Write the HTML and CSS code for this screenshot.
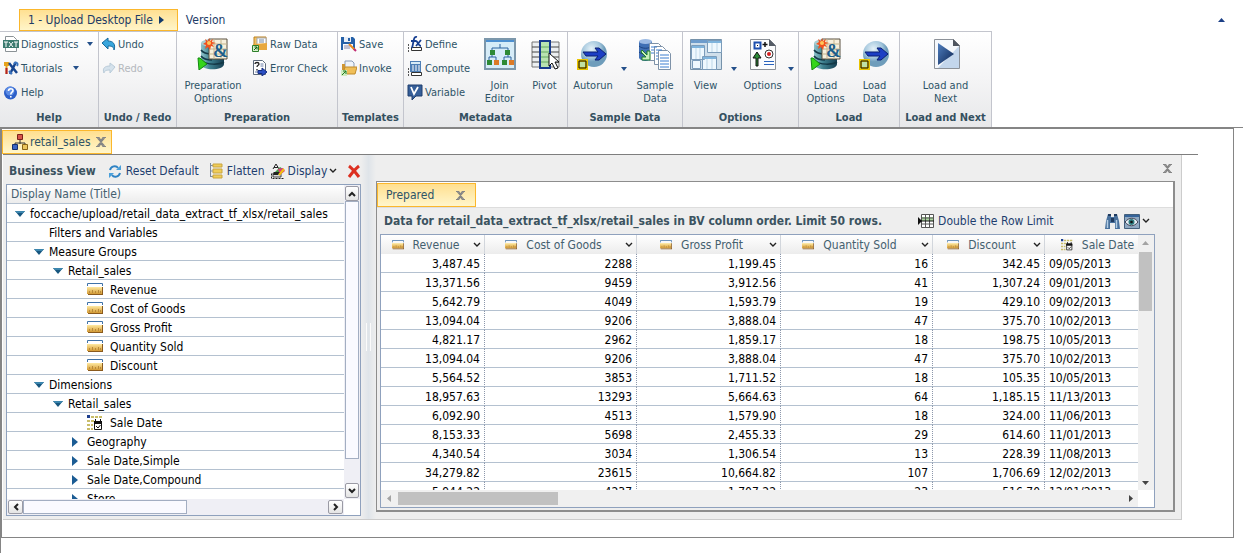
FILE: index.html
```
<!DOCTYPE html>
<html lang="en">
<head>
    <meta charset="utf-8">
    <title>Upload Desktop File</title>
    <link rel="stylesheet" href="styles.css">
</head>
<body>
    <svg class="sprite" aria-hidden="true">
        <defs>
            <linearGradient id="teal"><stop offset="0" stop-color="#8fc3cb"/><stop offset=".4" stop-color="#3c7f8e"/><stop offset="1" stop-color="#173f52"/></linearGradient>
            <linearGradient id="gold" x2="0" y2="1"><stop offset="0" stop-color="#ffe9a0"/><stop offset="1" stop-color="#d39a35"/></linearGradient>
            <linearGradient id="navy" x2="1" y2="1"><stop offset="0" stop-color="#4f7fc0"/><stop offset="1" stop-color="#0c2350"/></linearGradient>
            <radialGradient id="orb" cx=".4" cy=".3"><stop offset="0" stop-color="#e4f1f8"/><stop offset=".7" stop-color="#a3c6dc"/><stop offset="1" stop-color="#6f9dbb"/></radialGradient>
        </defs>
        <symbol id="ruler" viewBox="0 0 16 13">
            <path d="M.5 3V.5h15V3" fill="none" stroke="#3f72a8"/>
            <path d="M0 4h15v7H0z" fill="url(#gold)"/>
            <path d="M15 4h1v8H1v-1h14z" fill="#8a5a1e"/>
            <path d="M2.500 8v2M5.500 7v3M8.500 8v2M11.500 7v3M13.500 8v2" stroke="#b98a3a"/>
        </symbol>
        <symbol id="date" viewBox="0 0 16 16">
            <path d="M0 0h3v3H0z" fill="#1d3f8f"/>
            <path d="M4 1h3v2H4zM8 1h3v2H8zM12 1h3v2h-3zM0 5h3v2H0zM0 9h3v2H0zM0 13h3v2H0zM4 5h3v2H4zM4 9h2v2H4zM4 13h2v2H4z" fill="#c9bd6a"/>
            <path d="M7.500 6.500h7v8h-7z" fill="#fff" stroke="#111"/>
            <path d="M7 6h8v3H7zM8 4h1v2H8zM13 4h1v2h-1z" fill="#111"/>
            <path d="M9 11l2 2 2.500-3" fill="none" stroke="#111"/>
        </symbol>
        <symbol id="dboptions" viewBox="0 0 32 32">
            <path d="M4 5v21c0 7 23 7 23 0V5z" fill="url(#teal)"/>
            <ellipse cx="15" cy="5" rx="11" ry="4" fill="#a9cdd2"/>
            <path d="M4 12c3 4 8 4 11 4M4 18c3 4 8 4 11 4M5 23c5 4 17 4 22 1" fill="none" stroke="#143947" stroke-width="1.500"/>
            <path d="M12 1h18v20H12z" fill="#f7f0dc" stroke="#5b5140"/>
            <path d="M12 6h18M12 11h18M12 16h18M17 1v20M24 1v20" stroke="#c2b48e"/>
            <path d="M12 0l1 3 3-2-1 3 4 1-4 1 2 3-3-1-1 4-2-3-3 2 1-4-3-1 3-2-1-3 3 2z" fill="#f0521f"/>
            <circle cx="12" cy="5" r="2" fill="#ffc65a"/>
            <path d="M1 20h2l7 6-8 6z" fill="#35d51c" stroke="#128a10"/>
        </symbol>
        <symbol id="orbarrow" viewBox="0 0 32 32">
            <circle cx="17" cy="16" r="13" fill="url(#orb)"/>
            <path d="M6 14h15l-3-4h4l7 6-7 6h-4l3-4H9z" fill="#1c3fc4" stroke="#0b1f72"/>
            <path d="M1.500 22.500h8v8h-8z" fill="#bfe0a5" stroke="#e9c400" stroke-width="3"/>
            <path d="M2 23h7v7H2z" fill="none" stroke="#111"/>
        </symbol>
        <symbol id="cross" viewBox="0 0 10 10">
            <path d="M0 .5h3L5 3.500 7 .5h3M0 9.500h3L5 6.500l2 3h3M1.500 1l7 8M8.500 1l-7 8" fill="none" stroke="#858585" stroke-width="1.200"/>
        </symbol>
        <symbol id="chev" viewBox="0 0 8 6"><path d="M1 1l3 3 3-3" fill="none" stroke="#222" stroke-width="1.400"/></symbol>
        <symbol id="drop" viewBox="0 0 6 4"><path d="M0 0h6L3 4z" fill="#24508a"/></symbol>
        <symbol id="open" viewBox="0 0 10 6"><path d="M0 0h10L5 6z" fill="#17567f"/><path d="M0 0h10L8 2H2z" fill="#3c86ae"/></symbol>
        <symbol id="closed" viewBox="0 0 6 10"><path d="M0 0l6 5-6 5z" fill="#1b5c94"/></symbol>
    </svg>

    <nav class="steps">
        <button class="step active">1 - Upload Desktop File
            <svg width="5" height="8" viewBox="0 0 5 8"><path d="M0 0l5 4-5 4z" fill="#123a6b"/></svg>
        </button>
        <a class="step" href="#version">Version</a>
        <button class="collapse" aria-label="Collapse ribbon"><svg width="7" height="4" viewBox="0 0 7 4"><path d="M0 4h7L3.500 0z" fill="#1b3f86"/></svg></button>
    </nav>

    <div class="ribbon">
        <section class="group help">
            <div class="tools">
                <div class="stack">
                    <button class="small">
                        <svg width="16" height="16" viewBox="0 0 16 16"><path d="M2.500.5h8l3 3v12h-11z" fill="#fff" stroke="#8b9296"/><path d="M0 4h16v8H0z" fill="#3c7a6f"/><path d="M1 6h4M3 6v5M6 6l4 5M10 6l-4 5M11 6h4M13 6v5" stroke="#fff" fill="none"/></svg>
                        Diagnostics <svg class="push" width="6" height="4"><use href="#drop"/></svg>
                    </button>
                    <button class="small tutorials">
                        <svg width="16" height="16" viewBox="0 0 16 16"><path d="M1 2h5v4H4.500v8h-2V6H1z" fill="#e6a31c"/><path d="M2.500 8h2v6h-2z" fill="#b3202a"/><path d="M6 3l8 10M13 2L7 14" stroke="#17458f" stroke-width="2.500"/><path d="M11 4c1-3 5-1 3 2M6 11l3 3" stroke="#3b74bf" fill="none" stroke-width="2"/></svg>
                        Tutorials <svg class="push" width="6" height="4"><use href="#drop"/></svg>
                    </button>
                    <button class="small">
                        <svg width="16" height="16" viewBox="0 0 16 16"><circle cx="7.500" cy="9" r="6.500" fill="#2c5fc9"/><circle cx="7" cy="7" r="4.500" fill="#5c8ce4"/><path d="M5.500 7c0-3 4.500-3 4.500-.5C10 8.500 7.800 8 7.800 10.500M7.800 12v1.600" fill="none" stroke="#fff" stroke-width="1.600"/></svg>
                        Help
                    </button>
                </div>
            </div>
            <h2>Help</h2>
        </section>

        <section class="group undo">
            <div class="tools">
                <div class="stack">
                    <button class="small">
                        <svg width="14" height="14" viewBox="0 0 14 14"><path d="M0 6l6-5v3c5 0 8 3 6 9 0-3-2-4-6-4v3z" fill="#39a6dc" stroke="#17699c"/></svg>
                        Undo
                    </button>
                    <button class="small" disabled>
                        <svg width="14" height="14" viewBox="0 0 14 14"><path d="M13 6L8 2v3C3 5 0 7 2 12c0-2 2-3 6-3v3z" fill="#d5e2ec" stroke="#b9cbd9"/></svg>
                        Redo
                    </button>
                </div>
            </div>
            <h2>Undo / Redo</h2>
        </section>

        <section class="group prep">
            <div class="tools">
                <button class="big"><svg width="32" height="32"><use href="#dboptions"/><text x="16" y="19" class="amp">&amp;</text></svg>Preparation Options</button>
                <div class="stack">
                    <button class="small">
                        <svg width="16" height="16" viewBox="0 0 16 16"><path d="M2 1h12v10H2z" fill="#f2c465" stroke="#bb8022"/><path d="M5 2h9v8H5z" fill="#fff" stroke="#a3a9b3"/><path d="M7 4h5M7 6h5" stroke="#6e88a8"/><path d="M1 8l14-1v7H3z" fill="#e8a83e"/><path d="M.5 9.500h6v6h-6z" fill="#d7f1c9" stroke="#2d7f2b"/><path d="M2 14l3-3M2.500 11H5v2.500" stroke="#135e13" fill="none"/></svg>
                        Raw Data
                    </button>
                    <button class="small">
                        <svg width="16" height="16" viewBox="0 0 16 16"><path d="M1.500.5h9l3 3v11h-12z" fill="#fff" stroke="#5d6a7c"/><path d="M3 4c0-2 4-2 4 0 0 1.500-2 1-2 3M5 9v1.500" fill="none" stroke="#222" stroke-width="1.300"/><path d="M8.500 4h3M8.500 6h3M3 12h3" stroke="#6a7ea8"/><path d="M6 10.500h4V8l5 4-5 4v-2.500H6z" fill="#2b4fc4" stroke="#142d80"/></svg>
                        Error Check
                    </button>
                </div>
            </div>
            <h2>Preparation</h2>
        </section>

        <section class="group templates">
            <div class="tools">
                <div class="stack">
                    <button class="small">
                        <svg width="16" height="16" viewBox="0 0 16 16"><path d="M0 1h12l2 2v11H0z" fill="#2561a8"/><path d="M3 1h7v5H3z" fill="#e8eef7"/><path d="M7 2h2v3H7z" fill="#2561a8"/><path d="M2 8h10v6H2z" fill="#f6f8fb"/><path d="M3 10h6M3 12h6" stroke="#88a"/><path d="M8 8l6 6" stroke="#e88a1f" stroke-width="2"/><path d="M13 13l2 2" stroke="#c02b77" stroke-width="2"/></svg>
                        Save
                    </button>
                    <button class="small">
                        <svg width="16" height="16" viewBox="0 0 16 16"><path d="M4 1h7l2 2v9H4z" fill="#eef3f9" stroke="#8b9cb5"/><path d="M1 4h3v9H1z" fill="#cf9634"/><path d="M2 14l2-7h12l-2 7z" fill="#f0bf58" stroke="#c08b2a"/><path d="M0 10h6v6H0z" fill="#d0ecc0"/><path d="M1 15l4-4M2 11h3v3" fill="none" stroke="#207c20"/></svg>
                        Invoke
                    </button>
                </div>
            </div>
            <h2>Templates</h2>
        </section>

        <section class="group metadata">
            <div class="tools">
                <div class="stack">
                    <button class="small">
                        <svg width="16" height="16" viewBox="0 0 16 16"><path d="M1 15h1M1 12h1M1 9h1" stroke="#222" stroke-width="1.500"/><path d="M4.500 11.500h10v3h-10z" fill="#fff" stroke="#333"/><path d="M10 1C6 0 7 6 5 12M4 5h5M9 5c2 0 2 5 5 5M14 4l-5 6" fill="none" stroke="#173f91" stroke-width="1.800"/></svg>
                        Define
                    </button>
                    <button class="small">
                        <svg width="16" height="16" viewBox="0 0 16 16"><path d="M1 15h1M1 12h1M1 9h1" stroke="#222" stroke-width="1.500"/><path d="M3 1h11v11H3z" fill="#4f7fb5"/><path d="M4 2h9v2H4z" fill="#d9ecf7"/><path d="M5 6h8M5 8h8M5 10h8" stroke="#fff" stroke-dasharray="2 1"/><path d="M4.500 12.500h10v3h-10z" fill="#fff" stroke="#333"/></svg>
                        Compute
                    </button>
                    <button class="small">
                        <svg width="16" height="16" viewBox="0 0 16 16"><path d="M1 1h14v11H9l-4 4v-4H1z" fill="#365f99" stroke="#1e3e6e"/><path d="M4 3l3 7 4-7" fill="none" stroke="#fff" stroke-width="1.800"/></svg>
                        Variable
                    </button>
                </div>
                <button class="big">
                    <svg width="32" height="32" viewBox="0 0 32 32"><path d="M1 1h30v30H1z" fill="#d6ecf8" stroke="#7c97ab" stroke-width="2"/><path d="M2 3h28" stroke="#4c8fd0" stroke-width="2"/><path d="M16 6v4M8 14v-4h16v4M5 23v-4h7v4M20 23v-4h7v4M8 16v3M24 16v3" stroke="#2b63a0" fill="none"/><path d="M6 12h5v5H6zM21 12h5v5h-5zM3 22h5v5H3zM18 22h5v5h-5z" fill="#2d8a35"/><path d="M10 22h5v5h-5zM25 22h5v5h-5z" fill="#dc7a26"/></svg>
                    Join Editor
                </button>
                <button class="big">
                    <svg width="32" height="32" viewBox="0 0 32 32"><path d="M3 4h27v25H3z" fill="#eceff1" stroke="#777"/><path d="M3 9h27M3 14h27M3 19h27M3 24h27" stroke="#444"/><path d="M11 3h10v27H11z" fill="#b8e3b0" stroke="#173a8c" stroke-width="2"/><path d="M12 9h8M12 14h8M12 19h8M12 24h8" stroke="#65a85f"/><path d="M20 15v13l3-3 3 6 3-1-3-6h4z" fill="#fff" stroke="#111"/></svg>
                    Pivot
                </button>
            </div>
            <h2>Metadata</h2>
        </section>

        <section class="group sample">
            <div class="tools">
                <button class="big"><svg width="32" height="32"><use href="#orbarrow"/></svg>Autorun</button>
                <button class="more" aria-label="Autorun menu"><svg width="6" height="4"><use href="#drop"/></svg></button>
                <button class="big">
                    <svg width="32" height="32" viewBox="0 0 32 32"><path d="M0 3v17c2 4 11 4 13 0V3z" fill="#3f6fb4"/><ellipse cx="6.500" cy="3.500" rx="6.500" ry="2.500" fill="#9dbbe4"/><path d="M0 8c3 3 10 3 13 0M0 14c3 3 10 3 13 0" fill="none" stroke="#1c4280"/><path d="M10.500 5.500h9l3 3v14h-12z" fill="#fff" stroke="#7e92a8"/><path d="M15.500 8.500h8l3 3v15h-11z" fill="#fff" stroke="#7e92a8"/><path d="M19.500 12.500h9l3 3v16h-12z" fill="#fff" stroke="#7e92a8"/><path d="M21 17h9M21 20h9M21 23h9M21 26h9M21 29h9M12 9h6M12 12h3M12 15h3M17 12h6M17 15h2M17 18h2M17 21h2" stroke="#3c7fd0"/><path d="M3 12l5 5v-4h3v9H3v-3h4l-5-5z" fill="#c8efbb" stroke="#1d7d28"/></svg>
                    Sample Data
                </button>
            </div>
            <h2>Sample Data</h2>
        </section>

        <section class="group options">
            <div class="tools">
                <button class="big">
                    <svg width="32" height="32" viewBox="0 0 32 32"><path d="M.5 1.500h31v30H.5z" fill="#cfdfeb" stroke="#7692aa"/><path d="M1 2h30v3H1z" fill="#6d9ccc"/><path d="M17.500 2.500h14v12h-14zM1.500 7.500h13v14h-13zM12.500 18.500h14v13h-14zM2.500 22.500h8v8h-8z" fill="#eef8fe" stroke="#7b9cba"/><path d="M18 3h13v2H18zM2 8h12v2H2zM13 19h13v2H13z" fill="#7eb4dd"/><path d="M22 5v9M27 5v9M6 10v11M10 10v11M17 21v10M22 21v10" stroke="#bdd7e8"/></svg>
                    View
                </button>
                <button class="more" aria-label="View menu"><svg width="6" height="4"><use href="#drop"/></svg></button>
                <button class="big">
                    <svg width="32" height="32" viewBox="0 0 32 32"><path d="M3.500 1.500h19l6 6v24h-25z" fill="#fbfcfd" stroke="#8c9198"/><path d="M22 1l7 7h-7z" fill="#555c66"/><path d="M7.500 4.500h6v6h-6z" fill="#fff" stroke="#1c4fb0" stroke-width="2"/><path d="M10 7h1v1h-1z" fill="#111"/><path d="M18 4v5M15.500 6.500h5" stroke="#111" stroke-width="1.500"/><path d="M10 14l4 6h-3v8H9v-8H6z" fill="#2a8a36" stroke="#111"/><circle cx="22" cy="16" r="4" fill="#fff" stroke="#333"/><circle cx="22" cy="16" r="2" fill="#d61f1f"/><path d="M17 23.500h10M17 26.500h10" stroke="#2a63bd"/></svg>
                    Options
                </button>
                <button class="more" aria-label="Options menu"><svg width="6" height="4"><use href="#drop"/></svg></button>
            </div>
            <h2>Options</h2>
        </section>

        <section class="group load">
            <div class="tools">
                <button class="big"><svg width="32" height="32"><use href="#dboptions"/><text x="16" y="19" class="amp">&amp;</text></svg>Load Options</button>
                <button class="big"><svg width="32" height="32"><use href="#orbarrow"/></svg>Load Data</button>
            </div>
            <h2>Load</h2>
        </section>

        <section class="group next">
            <div class="tools">
                <button class="big">
                    <svg width="32" height="32" viewBox="0 0 32 32"><path d="M4.500 1.500h19l6 6v23h-25z" fill="#f5f8fc" stroke="#8c9198"/><path d="M29 8v22H8z" fill="#c3d6ec"/><path d="M23 1l7 7h-7z" fill="#4e5560"/><path d="M8 5l16 11L8 27z" fill="url(#navy)"/></svg>
                    Load and Next
                </button>
            </div>
            <h2>Load and Next</h2>
        </section>
    </div>

    <div class="page">
    <main class="frame">
        <div class="file-tabs">
            <button class="tab">
                <svg width="16" height="16" viewBox="0 0 16 16"><path d="M8 6v4M3 11V9h10v2" stroke="#333" fill="none"/><path d="M5.500.5h5v5h-5z" fill="#d8554a" stroke="#7c2019"/><path d="M.5 10.500h5v5h-5z" fill="#3b66c4" stroke="#16306e"/><path d="M10.500 10.500h5v5h-5z" fill="#ecc65c" stroke="#8a6417"/></svg>
                retail_sales
                <svg class="x" width="10" height="10"><use href="#cross"/></svg>
            </button>
        </div>

        <div class="workspace">
            <section class="business">
                <div class="toolbar">
                    <strong>Business View</strong>
                    <button class="tool"><svg width="14" height="15" viewBox="0 0 14 15"><path d="M2 6c1-4 6-5 8-2M12 9c-1 4-6 5-8 2" fill="none" stroke="#2f83c4" stroke-width="2"/><path d="M13 1v5H8zM1 14V9h5z" fill="#4ba0da"/></svg>Reset Default</button>
                    <button class="tool"><svg width="14" height="16" viewBox="0 0 14 16"><path d="M1.500 0v14M1 2.500h3M1 8h3M1 13.500h3" stroke="#7c8ba0" fill="none"/><path d="M4 1h9v3H4zM4 6h9v4H4zM4 12h9v3H4z" fill="#f0cd58" stroke="#c9a540"/></svg>Flatten</button>
                    <button class="tool display"><svg width="15" height="16" viewBox="0 0 15 16"><path d="M2 6l3-5 3 5M3 4.500h4" stroke="#222" fill="none"/><path d="M.5 10.500v5h12" stroke="#222" fill="none" stroke-dasharray="2 1"/><path d="M2 10h8v4H2z" fill="#d9d9d9" stroke="#444"/><path d="M4 9l5-5 3 2-5 6z" fill="#43a047"/><path d="M7 6l5-1 2 3-5 4z" fill="#e23b7a"/><path d="M3 9h6l-2 3H2z" fill="#222"/><path d="M8 12l5-6" stroke="#f1c40f" stroke-width="2"/></svg>Display<svg width="8" height="6"><use href="#chev"/></svg></button>
                    <button class="tool delete" aria-label="Delete"><svg width="14" height="15" viewBox="0 0 14 15"><path d="M2 2c4 3 7 7 10 11M12 2C8 5 5 9 2 13" fill="none" stroke="#dc2f20" stroke-width="3"/></svg></button>
                </div>
                <div class="tree">
                    <div class="tree-head">Display Name (Title)</div>
                    <ul class="nodes">
                        <li class="l0"><i><svg width="10" height="6"><use href="#open"/></svg></i>foccache/upload/retail_data_extract_tf_xlsx/retail_sales</li>
                        <li class="l1"><i></i>Filters and Variables</li>
                        <li class="l1"><i><svg width="10" height="6"><use href="#open"/></svg></i>Measure Groups</li>
                        <li class="l2"><i><svg width="10" height="6"><use href="#open"/></svg></i>Retail_sales</li>
                        <li class="l3"><i></i><svg class="kind" width="16" height="13"><use href="#ruler"/></svg>Revenue</li>
                        <li class="l3"><i></i><svg class="kind" width="16" height="13"><use href="#ruler"/></svg>Cost of Goods</li>
                        <li class="l3"><i></i><svg class="kind" width="16" height="13"><use href="#ruler"/></svg>Gross Profit</li>
                        <li class="l3"><i></i><svg class="kind" width="16" height="13"><use href="#ruler"/></svg>Quantity Sold</li>
                        <li class="l3"><i></i><svg class="kind" width="16" height="13"><use href="#ruler"/></svg>Discount</li>
                        <li class="l1"><i><svg width="10" height="6"><use href="#open"/></svg></i>Dimensions</li>
                        <li class="l2"><i><svg width="10" height="6"><use href="#open"/></svg></i>Retail_sales</li>
                        <li class="l3"><i></i><svg class="kind" width="16" height="16"><use href="#date"/></svg>Sale Date</li>
                        <li class="l3"><i><svg width="6" height="10"><use href="#closed"/></svg></i>Geography</li>
                        <li class="l3"><i><svg width="6" height="10"><use href="#closed"/></svg></i>Sale Date,Simple</li>
                        <li class="l3"><i><svg width="6" height="10"><use href="#closed"/></svg></i>Sale Date,Compound</li>
                        <li class="l3"><i><svg width="6" height="10"><use href="#closed"/></svg></i>Store</li>
                    </ul>
                    <div class="vscroll">
                        <button aria-label="Scroll up"><svg width="8" height="6" viewBox="0 0 8 6"><path d="M1 5l3-3 3 3" fill="none" stroke="#222" stroke-width="2"/></svg></button>
                        <div class="thumb"></div>
                        <button aria-label="Scroll down"><svg width="8" height="6" viewBox="0 0 8 6"><path d="M1 1l3 3 3-3" fill="none" stroke="#222" stroke-width="2"/></svg></button>
                    </div>
                    <div class="hscroll">
                        <button aria-label="Scroll left"><svg width="6" height="8" viewBox="0 0 6 8"><path d="M5 1L2 4l3 3" fill="none" stroke="#222" stroke-width="2"/></svg></button>
                        <div class="thumb"></div>
                        <button aria-label="Scroll right"><svg width="6" height="8" viewBox="0 0 6 8"><path d="M1 1l3 3-3 3" fill="none" stroke="#222" stroke-width="2"/></svg></button>
                    </div>
                </div>
            </section>

            <div class="splitter"><span></span></div>

            <section class="output">
                <div class="output-top"><button class="plain" aria-label="Close output"><svg width="9" height="9"><use href="#cross"/></svg></button></div>
                <div class="panel">
                    <div class="panel-tabs"><button class="tab">Prepared<svg class="x" width="9" height="9"><use href="#cross"/></svg></button></div>
                    <div class="panel-bar">
                        <strong>Data for retail_data_extract_tf_xlsx/retail_sales in BV column order. Limit 50 rows.</strong>
                        <button class="tool double"><svg width="16" height="14" viewBox="0 0 16 14"><path d="M3 1h12v12H3z" fill="#fff"/><path d="M3 3h12v4H3z" fill="#a9d59d"/><path d="M3.500.5h12v13h-12zM7.500 1v12M11.500 1v12M3 4h12M3 10h12" fill="none" stroke="#555"/><path d="M3 7h13" stroke="#111"/><path d="M0 3l4 4-4 4z" fill="#111"/></svg>Double the Row Limit</button>
                        <button class="plain find" aria-label="Find"><svg width="15" height="16" viewBox="0 0 15 16"><path d="M3 1h3v3h3V1h3l2 7 1 8h-5v-6H5v6H0l1-8z" fill="#48709c"/><path d="M3 1h3v2H3zM9 1h3v2H9zM6 5h3v4H6z" fill="#1e3a5f"/><path d="M2.500 7v8M11.500 7v8" stroke="#b4cde4" stroke-width="1.500"/></svg></button>
                        <button class="plain" aria-label="Preview"><svg width="16" height="15" viewBox="0 0 16 15"><path d="M.5.5h15v14H.5z" fill="#8fa9c2" stroke="#44607c"/><path d="M1 1h14v2H1z" fill="#35649a"/><path d="M1 8c4-5 10-5 13 0-4 5-9 5-13 0z" fill="#e4eef5" stroke="#445"/><circle cx="7.500" cy="8" r="3" fill="#2f7c80"/><circle cx="7.500" cy="8" r="1.300" fill="#111"/></svg><svg width="8" height="6"><use href="#chev"/></svg></button>
                    </div>
                    <div class="grid">
                        <div class="viewport">
                            <table>
                                <colgroup><col class="c-revenue"><col class="c-cost"><col class="c-profit"><col class="c-quantity"><col class="c-discount"><col class="c-date"></colgroup>
                                <thead>
                                    <tr>
                                        <th><div><svg width="12" height="10"><use href="#ruler"/></svg><span>Revenue</span><svg width="8" height="6"><use href="#chev"/></svg></div></th>
                                        <th><div><svg width="12" height="10"><use href="#ruler"/></svg><span>Cost of Goods</span><svg width="8" height="6"><use href="#chev"/></svg></div></th>
                                        <th><div><svg width="12" height="10"><use href="#ruler"/></svg><span>Gross Profit</span><svg width="8" height="6"><use href="#chev"/></svg></div></th>
                                        <th><div><svg width="12" height="10"><use href="#ruler"/></svg><span>Quantity Sold</span><svg width="8" height="6"><use href="#chev"/></svg></div></th>
                                        <th><div><svg width="12" height="10"><use href="#ruler"/></svg><span>Discount</span><svg width="8" height="6"><use href="#chev"/></svg></div></th>
                                        <th><div><svg width="12" height="12"><use href="#date"/></svg><span>Sale Date</span><svg width="8" height="6"><use href="#chev"/></svg></div></th>
                                    </tr>
                                </thead>
                                <tbody>
                                    <tr><td>3,487.45</td><td>2288</td><td>1,199.45</td><td>16</td><td>342.45</td><td>09/05/2013</td></tr>
                                    <tr><td>13,371.56</td><td>9459</td><td>3,912.56</td><td>41</td><td>1,307.24</td><td>09/01/2013</td></tr>
                                    <tr><td>5,642.79</td><td>4049</td><td>1,593.79</td><td>19</td><td>429.10</td><td>09/02/2013</td></tr>
                                    <tr><td>13,094.04</td><td>9206</td><td>3,888.04</td><td>47</td><td>375.70</td><td>10/02/2013</td></tr>
                                    <tr><td>4,821.17</td><td>2962</td><td>1,859.17</td><td>18</td><td>198.75</td><td>10/05/2013</td></tr>
                                    <tr><td>13,094.04</td><td>9206</td><td>3,888.04</td><td>47</td><td>375.70</td><td>10/02/2013</td></tr>
                                    <tr><td>5,564.52</td><td>3853</td><td>1,711.52</td><td>18</td><td>105.35</td><td>10/05/2013</td></tr>
                                    <tr><td>18,957.63</td><td>13293</td><td>5,664.63</td><td>64</td><td>1,185.15</td><td>11/13/2013</td></tr>
                                    <tr><td>6,092.90</td><td>4513</td><td>1,579.90</td><td>18</td><td>324.00</td><td>11/06/2013</td></tr>
                                    <tr><td>8,153.33</td><td>5698</td><td>2,455.33</td><td>29</td><td>614.60</td><td>11/01/2013</td></tr>
                                    <tr><td>4,340.54</td><td>3034</td><td>1,306.54</td><td>13</td><td>228.39</td><td>11/08/2013</td></tr>
                                    <tr><td>34,279.82</td><td>23615</td><td>10,664.82</td><td>107</td><td>1,706.69</td><td>12/02/2013</td></tr>
                                    <tr><td>5,944.22</td><td>4237</td><td>1,707.22</td><td>23</td><td>516.70</td><td>12/01/2013</td></tr>
                                </tbody>
                            </table>
                        </div>
                        <div class="vscroll">
                            <button aria-label="Scroll up"><svg width="7" height="4" viewBox="0 0 7 4"><path d="M0 4h7L3.500 0z" fill="#a3a3a3"/></svg></button>
                            <div class="thumb"></div>
                            <button aria-label="Scroll down"><svg width="7" height="4" viewBox="0 0 7 4"><path d="M0 0h7L3.500 4z" fill="#444"/></svg></button>
                        </div>
                        <div class="hscroll">
                            <button aria-label="Scroll left"><svg width="4" height="7" viewBox="0 0 4 7"><path d="M4 0v7L0 3.500z" fill="#a3a3a3"/></svg></button>
                            <div class="thumb"></div>
                            <button aria-label="Scroll right"><svg width="4" height="7" viewBox="0 0 4 7"><path d="M0 0v7l4-3.500z" fill="#444"/></svg></button>
                        </div>
                    </div>
                </div>
            </section>
        </div>
    </main>
    </div>
</body>
</html>
```

FILE: styles.css
```
* {
    box-sizing: border-box;
}
body {
    margin: 0;
    height: 100vh;
    display: flex;
    flex-direction: column;
    overflow: hidden;
    background: #fff;
    color: #000;
    font-family: "DejaVu Sans Condensed", "DejaVu Sans", sans-serif;
    font-size: 12px;
}
button {
    display: flex;
    align-items: center;
    padding: 0;
    border: none;
    background: none;
    color: inherit;
    font: inherit;
    white-space: nowrap;
    cursor: pointer;
}
svg {
    flex: none;
    display: block;
}
.sprite {
    position: absolute;
    width: 0;
    height: 0;
}
.amp {
    font: bold 18px "Liberation Serif", serif;
    fill: #1d5f8c;
}

/* steps */
.steps {
    display: flex;
    align-items: stretch;
    height: 31px;
    padding: 9px 18px 0 19px;
    color: #1d3b66;
}
.step {
    display: flex;
    align-items: center;
    gap: 6px;
    padding: 0 8px;
    color: #1d3b66;
    text-decoration: none;
}
.step.active {
    padding-right: 13px;
    border: 1px solid #fbb72c;
    background: linear-gradient(#ffe092, #fff5c9);
}
.collapse {
    margin-left: auto;
}

/* ribbon */
.ribbon {
    display: flex;
    color: #2e5468;
    font-size: 11px;
}
.group {
    flex: none;
    height: 96px;
    border: 1px solid #c3c5cd;
    border-width: 1px 1px 0 0;
    background: linear-gradient(#fff, #f4f4f5 50%, #e7e8ea);
}
.help { width: 99px; }
.undo { width: 78px; }
.prep { width: 161px; }
.templates { width: 66px; }
.metadata { width: 164px; }
.sample { width: 115px; }
.options { width: 116px; }
.load { width: 101px; }
.next { width: 92px; }
.tools {
    display: flex;
    height: 74px;
    padding-left: 3px;
}
.group h2 {
    margin: 0;
    line-height: 24px;
    text-align: center;
    font-size: 11px;
    color: #34505f;
}
.stack {
    flex: 1;
}
.small {
    width: 100%;
    height: 24px;
    gap: 2px;
}
.small:disabled {
    color: #b4b8bd;
}
.push {
    margin: 0 5px 0 auto;
}
.tutorials .push {
    margin-right: 19px;
}
.big {
    flex-direction: column;
    width: 45px;
    padding-top: 6px;
    line-height: 13px;
    white-space: normal;
    text-align: center;
}
.big svg {
    margin-bottom: 9px;
}
.more {
    width: 12px;
    justify-content: center;
}
.prep .big {
    width: 66px;
    margin-right: 6px;
}
.sample .tools,
.options .tools {
    padding-left: 0;
}
.sample .big,
.load .big {
    width: 50px;
}
.load .tools {
    padding-left: 2px;
}
.next .tools {
    justify-content: center;
    padding: 0;
}
.next .big {
    width: 60px;
}

/* main frame */
.page {
    flex: 1;
    min-height: 0;
    display: flex;
    padding: 0 9px 15px 0;
    border: 1px solid #858585;
    border-width: 1px 0 0 1px;
}
.frame {
    flex: 1;
    min-width: 0;
    display: flex;
    flex-direction: column;
    padding: 0 51px 17px 1px;
    border: 1px solid #858585;
}
.file-tabs {
    display: flex;
    border-bottom: 1px solid #7e7e7e;
    margin: 1px -16px 0 0;
}
.tab {
    height: 24px;
    border: 1px solid #fbb72c;
    background: linear-gradient(#ffdf8f, #fff6cc);
    color: #2e5468;
}
.file-tabs .tab {
    gap: 2px;
    margin-left: -1px;
    padding: 0 5px 0 9px;
}
.file-tabs .x {
    margin-left: 3px;
}
.workspace {
    flex: 1;
    min-height: 0;
    display: flex;
    padding: 0 6px 3px 3px;
    border: 1px solid #ccc;
    border-width: 0 1px 1px 0;
    background: #eee;
}
.business {
    width: 355px;
    flex: none;
    display: flex;
    flex-direction: column;
}
.toolbar {
    display: flex;
    align-items: center;
    height: 29px;
    padding: 3px 2px 0 3px;
    color: #1e3e5e;
}
.toolbar strong {
    margin-right: 12px;
    color: #3b5360;
    white-space: nowrap;
}
.tool {
    gap: 4px;
    margin-right: 10px;
    color: #1e3e6e;
}
.tool.display {
    margin: 0 10px 0 -4px;
    gap: 2px;
}
.tool.delete {
    margin: 0 0 0 auto;
}

/* tree */
.tree {
    flex: 1;
    min-height: 0;
    display: grid;
    grid-template: 19px 1fr 16px / 1fr 16px;
    border: 1px solid #8fa1bd;
    background: #fff;
}
.tree-head {
    padding-left: 4px;
    line-height: 18px;
    border-bottom: 1px solid #b4c1d0;
    background: linear-gradient(#fff, #ececec);
    color: #44606f;
}
.nodes {
    margin: 0;
    padding: 0;
    list-style: none;
    overflow: hidden;
}
.nodes li {
    display: flex;
    align-items: center;
    height: 19px;
    padding-top: 1px;
    border-bottom: 1px solid #b4c1d0;
    white-space: nowrap;
}
.nodes i {
    flex: none;
    width: 15px;
}
.kind {
    margin-right: 7px;
}
.l0 { padding-left: 8px; }
.l1 { padding-left: 27px; }
.l2 { padding-left: 46px; }
.l3 { padding-left: 65px; }

/* scrollbars */
.vscroll,
.hscroll {
    display: flex;
    background: #efeff5;
}
.vscroll {
    flex-direction: column;
    grid-column: 2;
    grid-row: 1 / 3;
}
.hscroll {
    grid-column: 1;
    grid-row: 3;
}
.vscroll button,
.hscroll button {
    flex: none;
    justify-content: center;
    width: 15px;
    height: 15px;
}
.tree .vscroll,
.tree .hscroll {
    padding: 1px;
}
.tree .vscroll button,
.tree .hscroll button {
    border: 1px solid #9a9aa4;
    border-radius: 2px;
    background: linear-gradient(#fff, #e4e4e4);
}
.tree .vscroll button,
.tree .vscroll .thumb {
    width: 14px;
}
.tree .hscroll button,
.tree .hscroll .thumb {
    height: 14px;
}
.tree .thumb {
    border: 1px solid #a3aec2;
    background: #fafaff;
}
.tree .vscroll .thumb {
    height: 92%;
    margin-bottom: 24px;
}
.tree .hscroll .thumb {
    width: 164px;
}
.vscroll button:last-child {
    margin-top: auto;
}
.hscroll button:last-child {
    margin-left: auto;
}

/* splitter */
.splitter {
    flex: none;
    display: flex;
    align-items: center;
    justify-content: center;
    width: 15px;
    margin-bottom: -3px;
    background: linear-gradient(90deg, #eee, #dfe4e9 50%, #eee);
}
.splitter span {
    width: 5px;
    height: 28px;
    border: 1px solid #fbfbfb;
    border-width: 0 1px;
}

/* output */
.output {
    flex: 1;
    min-width: 0;
    display: flex;
    flex-direction: column;
    padding-bottom: 4px;
}
.output-top {
    display: flex;
    justify-content: flex-end;
    height: 26px;
    padding-right: 3px;
}
.panel {
    flex: 1;
    min-height: 0;
    display: flex;
    flex-direction: column;
    border: 1px solid #8d8d8d;
    border-right-width: 2px;
    border-bottom-width: 2px;
}
.panel-tabs {
    padding-top: 1px;
    background: #fff;
    border-bottom: 1px solid #ddd;
}
.panel .tab {
    gap: 22px;
    padding: 0 10px 0 8px;
}
.panel-bar {
    display: flex;
    align-items: center;
    height: 26px;
    padding: 0 23px 0 7px;
}
.panel-bar strong {
    color: #3b5360;
    white-space: nowrap;
}
.double {
    margin-left: 36px;
}
.plain {
    gap: 2px;
}
.find {
    margin: 0 4px 0 auto;
}
.grid {
    flex: 1;
    min-height: 0;
    display: grid;
    grid-template: 1fr 17px / minmax(0, 1fr) 16px;
    margin: 0 18px 2px 3px;
    border: 1px solid #8fa1bd;
    background: #fff;
}
.viewport {
    overflow: hidden;
}
.grid .vscroll,
.grid .hscroll {
    background: #f0f0f0;
}
.grid .vscroll {
    grid-row: 1;
}
.grid .hscroll {
    grid-row: 2;
    align-items: center;
}
.grid .thumb {
    background: #c1c1c1;
}
.grid .vscroll .thumb {
    width: 13px;
    height: 59px;
    margin: 2px 0 0 1px;
}
.grid .hscroll .thumb {
    width: 160px;
    height: 13px;
    margin-left: 2px;
}

table {
    table-layout: fixed;
    width: 100%;
    min-width: 784px;
    border-collapse: separate;
    border-spacing: 0;
}
.c-revenue { width: 104px; }
.c-cost { width: 152px; }
.c-profit { width: 144px; }
.c-quantity { width: 152px; }
.c-discount { width: 112px; }
.c-date { width: 120px; }
th {
    height: 19px;
    padding: 0 3px;
    border-right: 1px solid #d2d6dc;
    background: linear-gradient(#fff, #ececec);
    color: #44606f;
    font-weight: normal;
}
th div {
    display: flex;
    align-items: center;
}
th span {
    margin: 0 auto 0 9px;
    padding-right: 6px;
}
th svg:first-child {
    margin-left: auto;
}
td {
    height: 19px;
    padding: 2px 4px 0;
    border-right: 1px dotted #8c97ab;
    border-bottom: 1px solid #b4c1d0;
    line-height: 16px;
    text-align: right;
}
td:last-child {
    text-align: left;
}
```
